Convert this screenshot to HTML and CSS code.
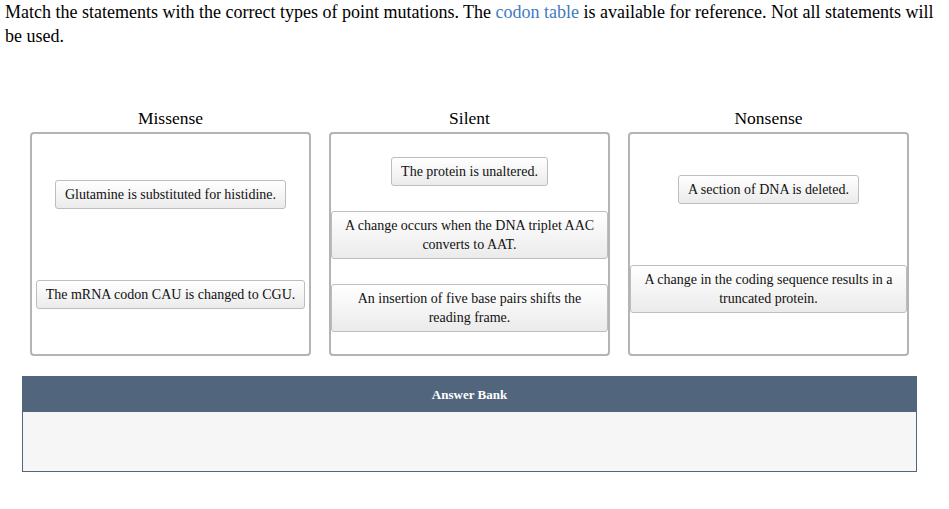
FILE: index.html
```html
<!DOCTYPE html>
<html lang="en">
<head>
<meta charset="utf-8">
<title>Point mutations</title>
<link rel="stylesheet" href="styles.css">
</head>
<body>
<div class="page">
  <p class="prompt">Match the statements with the correct types of point mutations. The <a class="link" href="#">codon table</a> is available for reference. Not all statements will be used.</p>

  <div class="columns">
    <div class="column">
      <div class="col-title">Missense</div>
      <div class="drop">
        <div class="card">Glutamine is substituted for histidine.</div>
        <div class="card">The mRNA codon CAU is changed to CGU.</div>
      </div>
    </div>
    <div class="column">
      <div class="col-title">Silent</div>
      <div class="drop">
        <div class="card">The protein is unaltered.</div>
        <div class="card">A change occurs when the DNA triplet AAC converts to AAT.</div>
        <div class="card">An insertion of five base pairs shifts the reading frame.</div>
      </div>
    </div>
    <div class="column">
      <div class="col-title">Nonsense</div>
      <div class="drop">
        <div class="card">A section of DNA is deleted.</div>
        <div class="card">A change in the coding sequence results in a truncated protein.</div>
      </div>
    </div>
  </div>

  <div class="bank">
    <div class="bank-head">Answer Bank</div>
    <div class="bank-body"></div>
  </div>
</div>
</body>
</html>
```

FILE: styles.css
```css
html, body {
  margin: 0;
  padding: 0;
  background: #ffffff;
}

body {
  font-family: "Liberation Serif", "Times New Roman", serif;
  color: #000000;
}

.page {
  padding: 0 5px;
}

.prompt {
  margin: 0;
  font-size: 18px;
  line-height: 24px;
}

.link {
  color: #3f7cc0;
  text-decoration: none;
}

.columns {
  display: flex;
  gap: 18px;
  margin: 60px 35px 0 25px;
}

.column {
  flex: 1 1 0;
  display: flex;
  flex-direction: column;
  align-items: stretch;
}

.col-title {
  text-align: center;
  font-size: 17.5px;
  line-height: 20px;
  height: 24px;
}

.drop {
  height: 200px;
  padding: 10px 0;
  border: 2px solid #b4b4b4;
  border-radius: 4px;
  display: flex;
  flex-direction: column;
  justify-content: space-around;
  align-items: center;
}

.card {
  box-sizing: border-box;
  max-width: 100%;
  padding: 4px 9px;
  border: 1px solid #bdbdbd;
  border-radius: 3px;
  background: linear-gradient(#ffffff, #ebebeb);
  font-size: 14px;
  line-height: 19px;
  text-align: center;
  color: #111111;
}

.bank {
  margin: 20px 27px 0 17px;
  border: 1px solid #51657d;
}

.bank-head {
  background: #51657d;
  color: #ffffff;
  font-weight: bold;
  font-size: 13px;
  text-align: center;
  height: 35px;
  line-height: 35px;
}

.bank-body {
  background: #f6f6f6;
  height: 59px;
}
```
